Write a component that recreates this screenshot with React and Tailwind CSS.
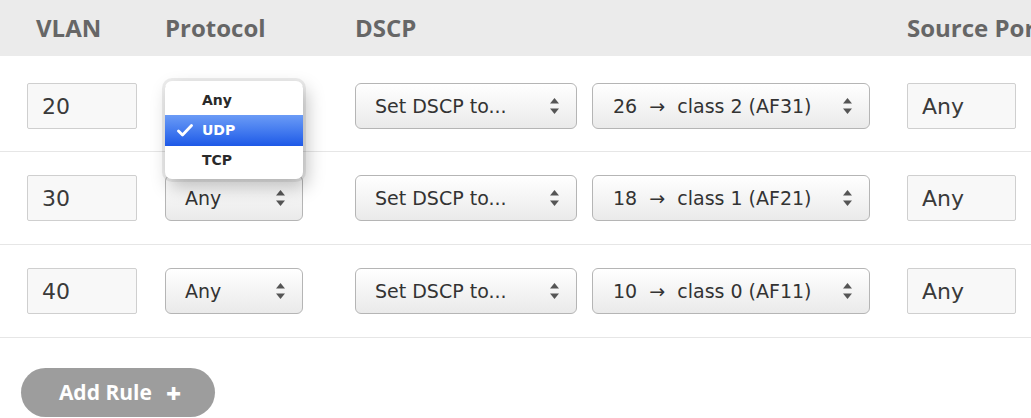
import React from "react";

const rules = [
  { vlan: "20", proto: "UDP", dscp: "26", cls: "class 2 (AF31)", port: "Any" },
  { vlan: "30", proto: "Any", dscp: "18", cls: "class 1 (AF21)", port: "Any" },
  { vlan: "40", proto: "Any", dscp: "10", cls: "class 0 (AF11)", port: "Any" },
];

const Arrows = () => (
  <svg width="9" height="16" viewBox="0 0 9 16" className="shrink-0">
    <path d="M4.5 0 L9 5.5 H0 Z" fill="#555" />
    <path d="M0 10.5 H9 L4.5 16 Z" fill="#555" />
  </svg>
);

const Select = ({ children, width }) => (
  <div
    className={`flex h-[46px] items-center justify-between rounded-[6px] border border-[#b5b5b5] bg-linear-to-b from-white to-[#eaeaea] pl-[19px] pr-[17px] whitespace-nowrap text-[19px] text-[#333] shadow-[inset_0_1px_0_#fff] ${width}`}
  >
    <span>{children}</span>
    <Arrows />
  </div>
);

const Field = ({ value, width }) => (
  <div
    className={`flex h-[46px] items-center rounded-[2px] border border-[#cfcfcf] bg-[#f8f8f8] pl-[14px] text-[22px] text-[#3a3a3a] ${width}`}
  >
    {value}
  </div>
);

const Menu = () => (
  <div className="absolute left-[165px] top-[25px] z-10 w-[138px] rounded-[7px] bg-white py-[4px] font-['DejaVu_Sans',sans-serif] text-[14px] font-bold text-[#2a2a2a] shadow-[0_0_0_3px_rgba(0,0,0,0.07),4px_8px_18px_rgba(0,0,0,0.25)]">
    <div className="flex h-[30px] items-center pl-[37px]">Any</div>
    <div className="relative flex h-[31px] items-center bg-linear-to-b from-[#6b9bf6] to-[#1d58e7] pl-[37px] text-white">
      <svg width="16" height="13" viewBox="0 0 16 13" className="absolute left-[12px] top-[9px]">
        <path d="M1.5 7 L5.5 11 L14.5 1.5" fill="none" stroke="#fff" strokeWidth="2.8" strokeLinecap="round" strokeLinejoin="round" />
      </svg>
      UDP
    </div>
    <div className="flex h-[29px] items-center pl-[37px]">TCP</div>
  </div>
);

export default function App() {
  return (
    <div className="w-[1031px] h-[418px] overflow-hidden bg-white font-['DejaVu_Sans',sans-serif]">
      <div className="flex h-[56px] items-center whitespace-nowrap bg-[#ebebeb] pl-[36px] font-['Open_Sans',sans-serif] text-[24px] font-bold text-[#666]">
        <div className="w-[129px] shrink-0">VLAN</div>
        <div className="w-[190px] shrink-0">Protocol</div>
        <div className="w-[552px] shrink-0">DSCP</div>
        <div className="shrink-0">Source Port</div>
      </div>

      {rules.map((r, i) => (
        <div
          key={r.vlan}
          className={`relative flex items-center border-b border-[#e6e6e6] pl-[27px] ${i === 0 ? "pt-[27px] pb-[22px]" : "py-[23px]"}`}
        >
          <Field value={r.vlan} width="w-[110px]" />
          <div className="ml-[28px]">
            {/* row 1's select sits under the open menu */}
            <Select width="w-[138px]">{i === 0 ? "" : r.proto}</Select>
          </div>
          <div className="ml-[52px]">
            <Select width="w-[222px]">Set DSCP to...</Select>
          </div>
          <div className="ml-[15px]">
            <Select width="w-[278px] pl-[20px]">
              {r.dscp}{"\u00a0\u00a0→\u00a0\u00a0"}{r.cls}
            </Select>
          </div>
          <div className="ml-[37px]">
            <Field value={r.port} width="w-[109px]" />
          </div>
          {i === 0 && <Menu />}
        </div>
      ))}

      <div className="pl-[21px] pt-[30px]">
        <button className="flex h-[49px] w-[194px] items-center justify-center gap-[14px] rounded-full bg-[#9d9d9d] pl-[4px] font-['Open_Sans',sans-serif] text-[21px] font-bold text-white">
          <span>Add Rule</span>
          <span className="text-[26px] font-extrabold leading-none">+</span>
        </button>
      </div>
    </div>
  );
}
